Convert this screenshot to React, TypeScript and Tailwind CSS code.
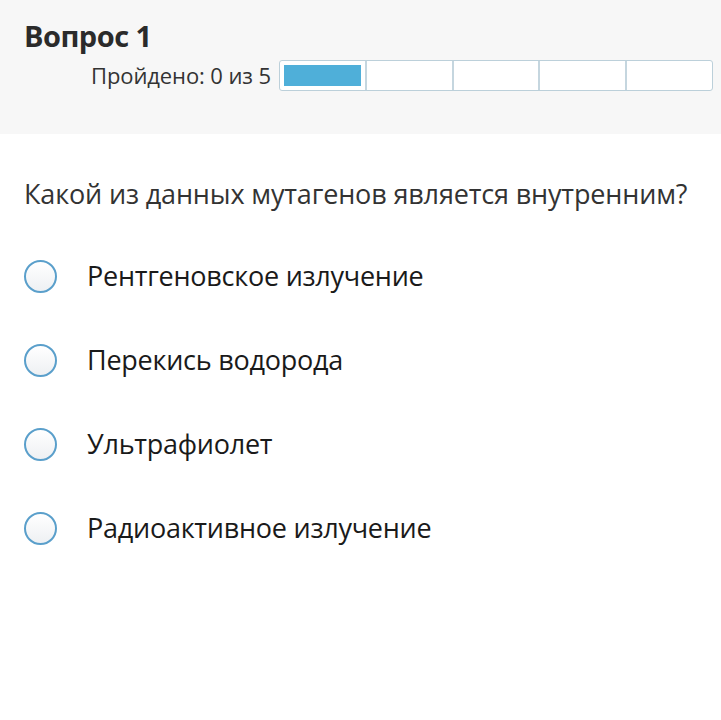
import React from 'react';

const options = [
    'Рентгеновское излучение',
    'Перекись водорода',
    'Ультрафиолет',
    'Радиоактивное излучение',
];

const App: React.FC = () => {
    const total = 5;
    const done = 0;

    return (
        <div className="min-h-[720px] w-[721px] bg-white font-['Open_Sans',sans-serif]">
            <div className="h-[134px] bg-[#f7f7f7] pl-6 pr-2 pt-[18px]">
                <h1 className="text-[29px] font-bold leading-9 tracking-[-0.5px] text-[#2b2b2b]">Вопрос 1</h1>
                <div className="mt-[5px] flex items-center">
                    <span className="ml-[67px] mr-2 text-[22px] tracking-[-0.1px] text-[#333]">
                        Пройдено: {done} из {total}
                    </span>
                    <div className="flex h-[31px] flex-1 rounded-[3px] border border-[#bcd0da] bg-white">
                        {Array.from({ length: total }).map((_, i) => (
                            <div
                                key={i}
                                className="flex-1 border-l-2 border-[#c5d6df] p-[4px] first:border-l-0"
                            >
                                {i === done && <div className="h-full w-full bg-[#4fafd9]" />}
                            </div>
                        ))}
                    </div>
                </div>
            </div>

            <div className="px-6 pt-[40px]">
                <p className="text-[27px] tracking-[-0.15px] text-[#333]">
                    Какой из данных мутагенов является внутренним?
                </p>
                <div className="mt-[45px] flex flex-col gap-[50px]">
                    {options.map((opt) => (
                        <label key={opt} className="flex h-[34px] items-center">
                            <span className="h-[33px] w-[33px] rounded-full border-2 border-[#5a9fcb] bg-gradient-to-b from-white to-[#eef0f3]" />
                            <span className="ml-[30px] text-[27px] tracking-[-0.25px] text-[#1a1a1a]">{opt}</span>
                        </label>
                    ))}
                </div>
            </div>
        </div>
    );
};

export default App;
